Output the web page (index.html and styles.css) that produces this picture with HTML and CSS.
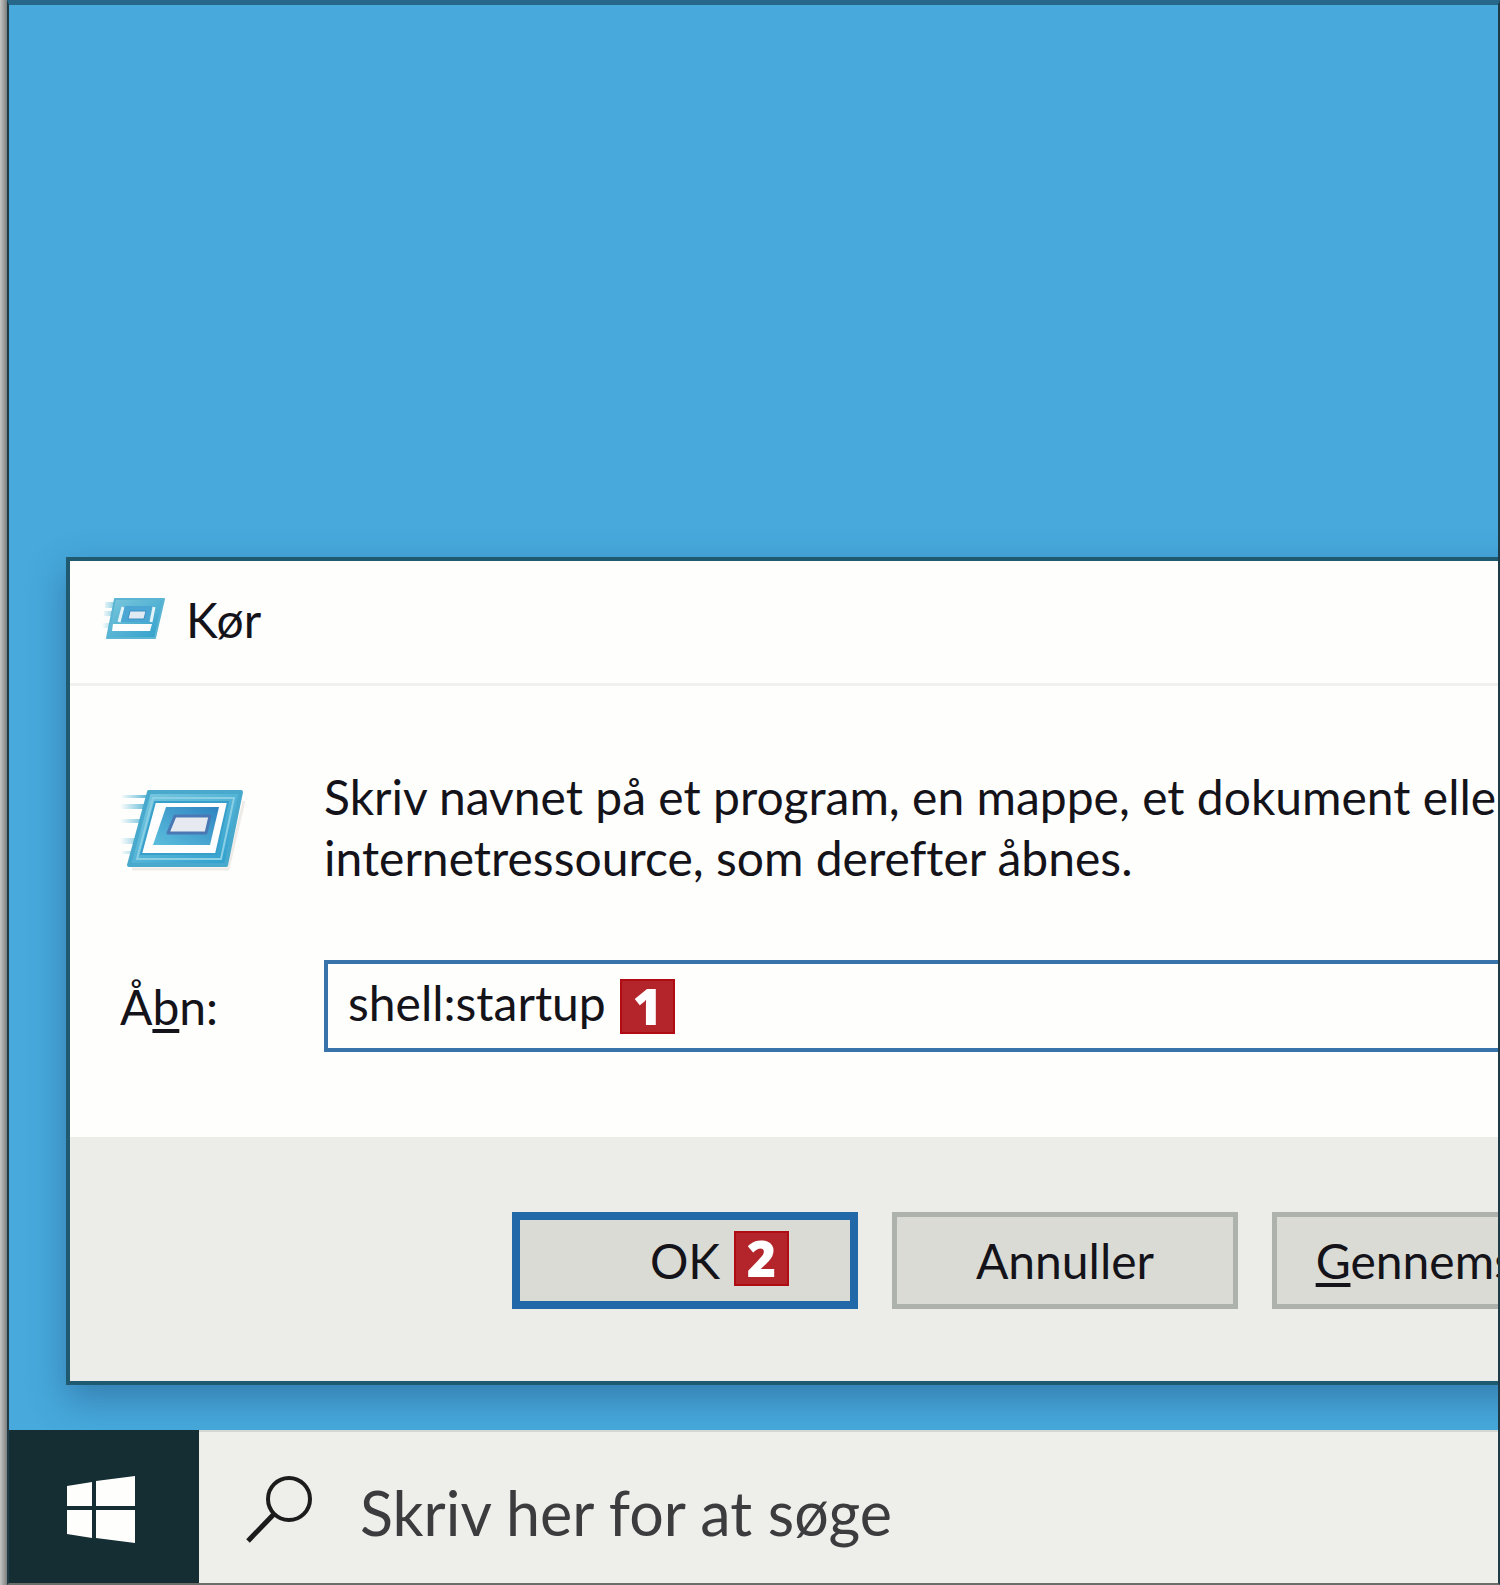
FILE: index.html
```html
<!DOCTYPE html>
<html lang="da">
<head>
    <meta charset="UTF-8">
    <meta name="viewport" content="width=device-width, initial-scale=1.0">
    <title>Kør</title>
    <link rel="stylesheet" href="styles.css">
</head>
<body>
    <div class="screen">
        <main class="desktop">
            <form class="dialog" onsubmit="return false">
                <header class="titlebar">
                    <svg class="icon-small" viewBox="0 0 64 44" aria-hidden="true">
                        <defs>
                            <linearGradient id="frameSmall" x1="0" y1="0" x2="1" y2="1">
                                <stop offset="0" stop-color="#7cc8dc"/>
                                <stop offset="1" stop-color="#2f9fcb"/>
                            </linearGradient>
                            <linearGradient id="trailSmall" x1="0" y1="0" x2="1" y2="0">
                                <stop offset="0" stop-color="#8fd0e3" stop-opacity="0"/>
                                <stop offset="1" stop-color="#8fd0e3"/>
                            </linearGradient>
                        </defs>
                        <path d="M3 5h10v6H3zM2 14h10v5H2zM0 26h9v5H0z" fill="url(#trailSmall)"/>
                        <path d="M13 2H62L53 41H5z" fill="url(#frameSmall)" stroke="#5bb5d3" stroke-width="2" stroke-linejoin="round"/>
                        <path d="M11 27H50L48 34H10z" fill="#fdfefd"/>
                        <path d="M21 10L17 25M52 10L49 25" stroke="#e4f3f7" stroke-width="3"/>
                        <path d="M23 9H50L46 25H19z" fill="#4ba6d3"/>
                        <path d="M28 14H44L42 22H26z" fill="#dfeaf2" stroke="#3d8fc4" stroke-width="1"/>
                    </svg>
                    <h1 class="title">Kør</h1>
                </header>
                <div class="content">
                    <svg class="icon-large" viewBox="0 0 130 84" aria-hidden="true">
                        <defs>
                            <linearGradient id="frame" x1="0" y1="0" x2="1" y2="1">
                                <stop offset="0" stop-color="#7dcbe0"/>
                                <stop offset="1" stop-color="#2a9dcd"/>
                            </linearGradient>
                            <linearGradient id="inner" x1="1" y1="0" x2="0" y2="1">
                                <stop offset="0" stop-color="#2f83c0"/>
                                <stop offset="1" stop-color="#5cbfdd"/>
                            </linearGradient>
                            <linearGradient id="trail" x1="0" y1="0" x2="1" y2="0">
                                <stop offset="0" stop-color="#5bb7d6" stop-opacity="0"/>
                                <stop offset="1" stop-color="#5bb7d6"/>
                            </linearGradient>
                        </defs>
                        <path d="M12 80H108L124 12" fill="none" stroke="#efece8" stroke-width="3"/>
                        <path d="M2 6h26v3H2zM0 15h25v5H0zM0 30h22v4H0zM0 49h18v6H0zM2 62h12v3H2z" fill="url(#trail)"/>
                        <path d="M29 3H121L106 76H9z" fill="url(#frame)" stroke="#48a9cd" stroke-width="4" stroke-linejoin="round"/>
                        <path d="M33 9H114L101 70H17z" fill="none" stroke="#8bcfe5" stroke-width="2"/>
                        <path d="M35 13H108L96 65H21z" fill="#fdfefd" stroke="#379fc9" stroke-width="2"/>
                        <path d="M46 18H99L90 56H33z" fill="url(#inner)"/>
                        <path d="M55 27H90L86 44H48z" fill="#e6eaf0" stroke="#4a78b4" stroke-width="3" stroke-linejoin="round"/>
                    </svg>
                    <p class="message">Skriv navnet på et program, en mappe, et dokument eller<br>internetressource, som derefter åbnes.</p>
                    <label class="label" for="open">Å<u>b</u>n:</label>
                    <div class="field">
                        <input class="open-input" id="open" type="text" value="shell:startup">
                        <span class="step step-input">1</span>
                    </div>
                </div>
                <footer class="actions">
                    <button class="button button-default" type="submit">OK<span class="step step-button">2</span></button>
                    <button class="button" type="button">Annuller</button>
                    <button class="button" type="button"><u>G</u>ennemse...</button>
                </footer>
            </form>
        </main>
        <nav class="taskbar">
            <button class="start" type="button" aria-label="Start">
                <svg class="start-logo" viewBox="0 0 68 68" aria-hidden="true">
                    <path d="M0 10L25 6V30H0zM29 5L68 0V30H29zM0 34H25V62L0 58zM29 34H68V67L29 62z" fill="#fefefc"/>
                </svg>
            </button>
            <label class="search">
                <svg class="search-icon" viewBox="0 0 68 68" aria-hidden="true">
                    <circle cx="43" cy="23" r="21" fill="none" stroke="#1c1c1c" stroke-width="4"/>
                    <path d="M28 38L2 65" stroke="#1c1c1c" stroke-width="5"/>
                </svg>
                <input class="search-input" type="text" placeholder="Skriv her for at søge" aria-label="Skriv her for at søge">
            </label>
        </nav>
    </div>
</body>
</html>
```
FILE: styles.css
```css
* {
    box-sizing: border-box;
}
body {
    margin: 0;
    padding-left: 7px;
    background: linear-gradient(to right, #c4c6c4, #7d807f 7px);
    font-family: Lato, "Open Sans", sans-serif;
    font-size: 48px;
    font-variant-ligatures: none;
    color: #15131a;
}
button, input {
    font: inherit;
    color: inherit;
}
.screen {
    display: flex;
    flex-direction: column;
    min-height: 100vh;
    overflow: hidden;
    border: 2px solid #1f3b47;
    border-top: 5px solid #27678a;
    border-bottom-color: #6b6d6b;
}
.desktop {
    flex: 1;
    display: flex;
    flex-direction: column;
    justify-content: flex-end;
    padding: 0 0 45px 57px;
    background-color: #47a9dc;
}
/* the window runs past the right edge of the screen */
.dialog {
    margin-right: -168px;
    border: 4px solid #1f5a70;
    background-color: #fefefd;
    box-shadow: 0 14px 34px rgba(30, 70, 120, 0.45);
}
.titlebar {
    display: flex;
    align-items: center;
    gap: 20px;
    height: 125px;
    padding: 0 32px 6px;
    border-bottom: 3px solid #f1f1f0;
}
.icon-small {
    width: 64px;
    height: 44px;
}
.title {
    margin: 0;
    font-size: 48px;
    font-weight: normal;
}
.content {
    display: grid;
    grid-template-columns: 204px 1fr;
    row-gap: 72px;
    align-items: center;
    padding: 80px 44px 85px 50px;
}
.icon-large {
    width: 130px;
    height: 84px;
    margin-top: 8px;
}
.message {
    margin: 0;
    line-height: 61px;
    white-space: nowrap;
}
u {
    text-decoration-thickness: 4px;
    text-underline-offset: 4px;
}
.field {
    position: relative;
}
.open-input {
    display: block;
    width: 100%;
    height: 92px;
    padding: 0 20px 8px;
    border: 4px solid #3873aa;
    background-color: #fefefd;
    outline: none;
}
.step {
    position: absolute;
    width: 55px;
    height: 55px;
    border: 2px solid #b00c14;
    background-color: #b3242b;
    color: #fff;
    font-family: "Open Sans", sans-serif;
    font-size: 50px;
    font-weight: 800;
    line-height: 50px;
    text-align: center;
}
.step-input {
    top: 19px;
    left: 296px;
}
.step-button {
    top: 11px;
    right: 61px;
}
.actions {
    display: flex;
    justify-content: flex-end;
    gap: 34px;
    padding: 75px 44px 72px;
    background-color: #ecede9;
}
.button {
    position: relative;
    width: 346px;
    height: 97px;
    padding: 0;
    border: 5px solid #adb2ac;
    background-color: #dadbd5;
}
.button-default {
    border: 8px solid #2068a8;
}
.taskbar {
    display: flex;
    height: 153px;
    background-color: #eeefeb;
}
.start {
    display: flex;
    align-items: center;
    justify-content: center;
    width: 190px;
    padding: 7px 6px 0 0;
    border: none;
    background-color: #142e33;
}
.start-logo {
    width: 68px;
    height: 68px;
}
.search {
    flex: 1;
    display: flex;
    align-items: center;
    gap: 46px;
    padding: 5px 0 0 47px;
    border-top: 2px solid #d3d8d3;
}
.search-icon {
    width: 68px;
    height: 68px;
}
.search-input {
    flex: 1;
    padding: 4px 0 0;
    border: none;
    background: none;
    font-size: 61px;
    outline: none;
}
.search-input::placeholder {
    color: #3c3c3e;
    opacity: 1;
}
```
